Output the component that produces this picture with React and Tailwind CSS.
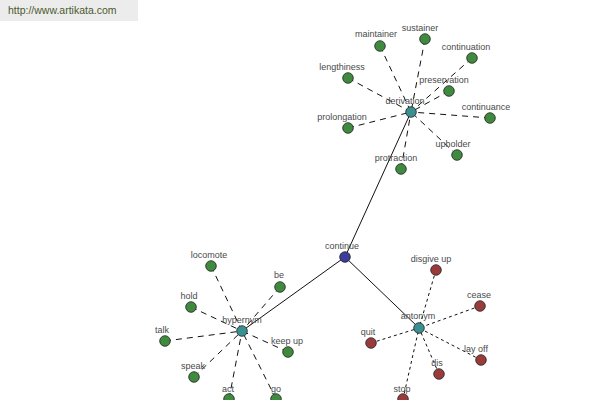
const GREEN = "#3f8a3f";
const RED = "#9a3b3b";

const hubs = {
  continue: { x: 345, y: 257, fill: "#3c3c9c", lx: 342, ly: 249 },
  derivation: { x: 411, y: 112, fill: "#3a9090", lx: 405, ly: 104 },
  hypernym: { x: 242, y: 331, fill: "#3a9090", lx: 242, ly: 323 },
  antonym: { x: 419, y: 328, fill: "#3a9090", lx: 418, ly: 319 },
};

const leaves = [
  // derivation
  { hub: "derivation", name: "maintainer", x: 380, y: 46, lx: 376, ly: 37, dash: "6 5" },
  { hub: "derivation", name: "sustainer", x: 425, y: 39, lx: 420, ly: 31, dash: "6 5" },
  { hub: "derivation", name: "continuation", x: 472, y: 58, lx: 466, ly: 50, dash: "6 5" },
  { hub: "derivation", name: "lengthiness", x: 348, y: 78, lx: 342, ly: 70, dash: "6 5" },
  { hub: "derivation", name: "preservation", x: 449, y: 91, lx: 444, ly: 83, dash: "6 5" },
  { hub: "derivation", name: "continuance", x: 490, y: 118, lx: 486, ly: 110, dash: "6 5" },
  { hub: "derivation", name: "prolongation", x: 348, y: 128, lx: 342, ly: 120, dash: "6 5" },
  { hub: "derivation", name: "upholder", x: 457, y: 155, lx: 453, ly: 147, dash: "6 5" },
  { hub: "derivation", name: "protraction", x: 401, y: 169, lx: 396, ly: 161, dash: "6 5" },
  // hypernym
  { hub: "hypernym", name: "locomote", x: 211, y: 266, lx: 209, ly: 258, dash: "6 5" },
  { hub: "hypernym", name: "be", x: 280, y: 287, lx: 279, ly: 278, dash: "6 5" },
  { hub: "hypernym", name: "hold", x: 191, y: 307, lx: 189, ly: 299, dash: "6 5" },
  { hub: "hypernym", name: "talk", x: 165, y: 341, lx: 162, ly: 333, dash: "6 5" },
  { hub: "hypernym", name: "keep up", x: 288, y: 352, lx: 287, ly: 344, dash: "6 5" },
  { hub: "hypernym", name: "speak", x: 194, y: 377, lx: 193, ly: 369, dash: "6 5" },
  { hub: "hypernym", name: "act", x: 229, y: 399, lx: 228, ly: 392, dash: "6 5" },
  { hub: "hypernym", name: "go", x: 276, y: 399, lx: 276, ly: 392, dash: "6 5" },
  // antonym
  { hub: "antonym", name: "disgive up", x: 436, y: 270, lx: 431, ly: 262, dash: "3 3", red: true },
  { hub: "antonym", name: "cease", x: 480, y: 306, lx: 479, ly: 298, dash: "3 3", red: true },
  { hub: "antonym", name: "quit", x: 371, y: 343, lx: 368, ly: 335, dash: "3 3", red: true },
  { hub: "antonym", name: "lay off", x: 481, y: 360, lx: 476, ly: 352, dash: "3 3", red: true },
  { hub: "antonym", name: "dis", x: 439, y: 374, lx: 437, ly: 366, dash: "3 3", red: true },
  { hub: "antonym", name: "stop", x: 403, y: 399, lx: 402, ly: 392, dash: "3 3", red: true },
];

const labelStyle = {
  fontFamily: '"Liberation Sans", Arial, sans-serif',
  fontSize: 9,
  fill: "#4a4a4a",
};

const Graph = () => (
  <svg width="600" height="400" viewBox="0 0 600 400" className="absolute inset-0">
    {/* solid links from the centre word */}
    {["derivation", "hypernym", "antonym"].map((k) => (
      <line
        key={k}
        x1={hubs.continue.x}
        y1={hubs.continue.y}
        x2={hubs[k].x}
        y2={hubs[k].y}
        stroke="#111"
        strokeWidth="1"
      />
    ))}
    {leaves.map((l) => (
      <line
        key={"e" + l.name}
        x1={l.x}
        y1={l.y}
        x2={hubs[l.hub].x}
        y2={hubs[l.hub].y}
        stroke="#111"
        strokeWidth="1"
        strokeDasharray={l.dash}
      />
    ))}
    {leaves.map((l) => (
      <g key={l.name}>
        <circle cx={l.x} cy={l.y} r="5.3" fill={l.red ? RED : GREEN} stroke="#222" strokeWidth="0.8" />
        <text x={l.lx} y={l.ly} textAnchor="middle" style={labelStyle}>
          {l.name}
        </text>
      </g>
    ))}
    {Object.entries(hubs).map(([name, h]) => (
      <g key={name}>
        <circle cx={h.x} cy={h.y} r="5.3" fill={h.fill} stroke="#222" strokeWidth="0.8" />
        <text x={h.lx} y={h.ly} textAnchor="middle" style={labelStyle}>
          {name}
        </text>
      </g>
    ))}
  </svg>
);

const App = () => {
  return (
    <div className="relative w-[600px] h-[400px] bg-white overflow-hidden">
      <Graph />
      <div className="absolute left-0 top-0 w-[138px] h-[21px] bg-[#ececec] pl-[8px] flex items-center">
        <span className="text-[10.5px] text-[#4b5a2c] font-['Liberation_Sans',Arial,sans-serif]">
          http://www.artikata.com
        </span>
      </div>
    </div>
  );
};

export default App;
